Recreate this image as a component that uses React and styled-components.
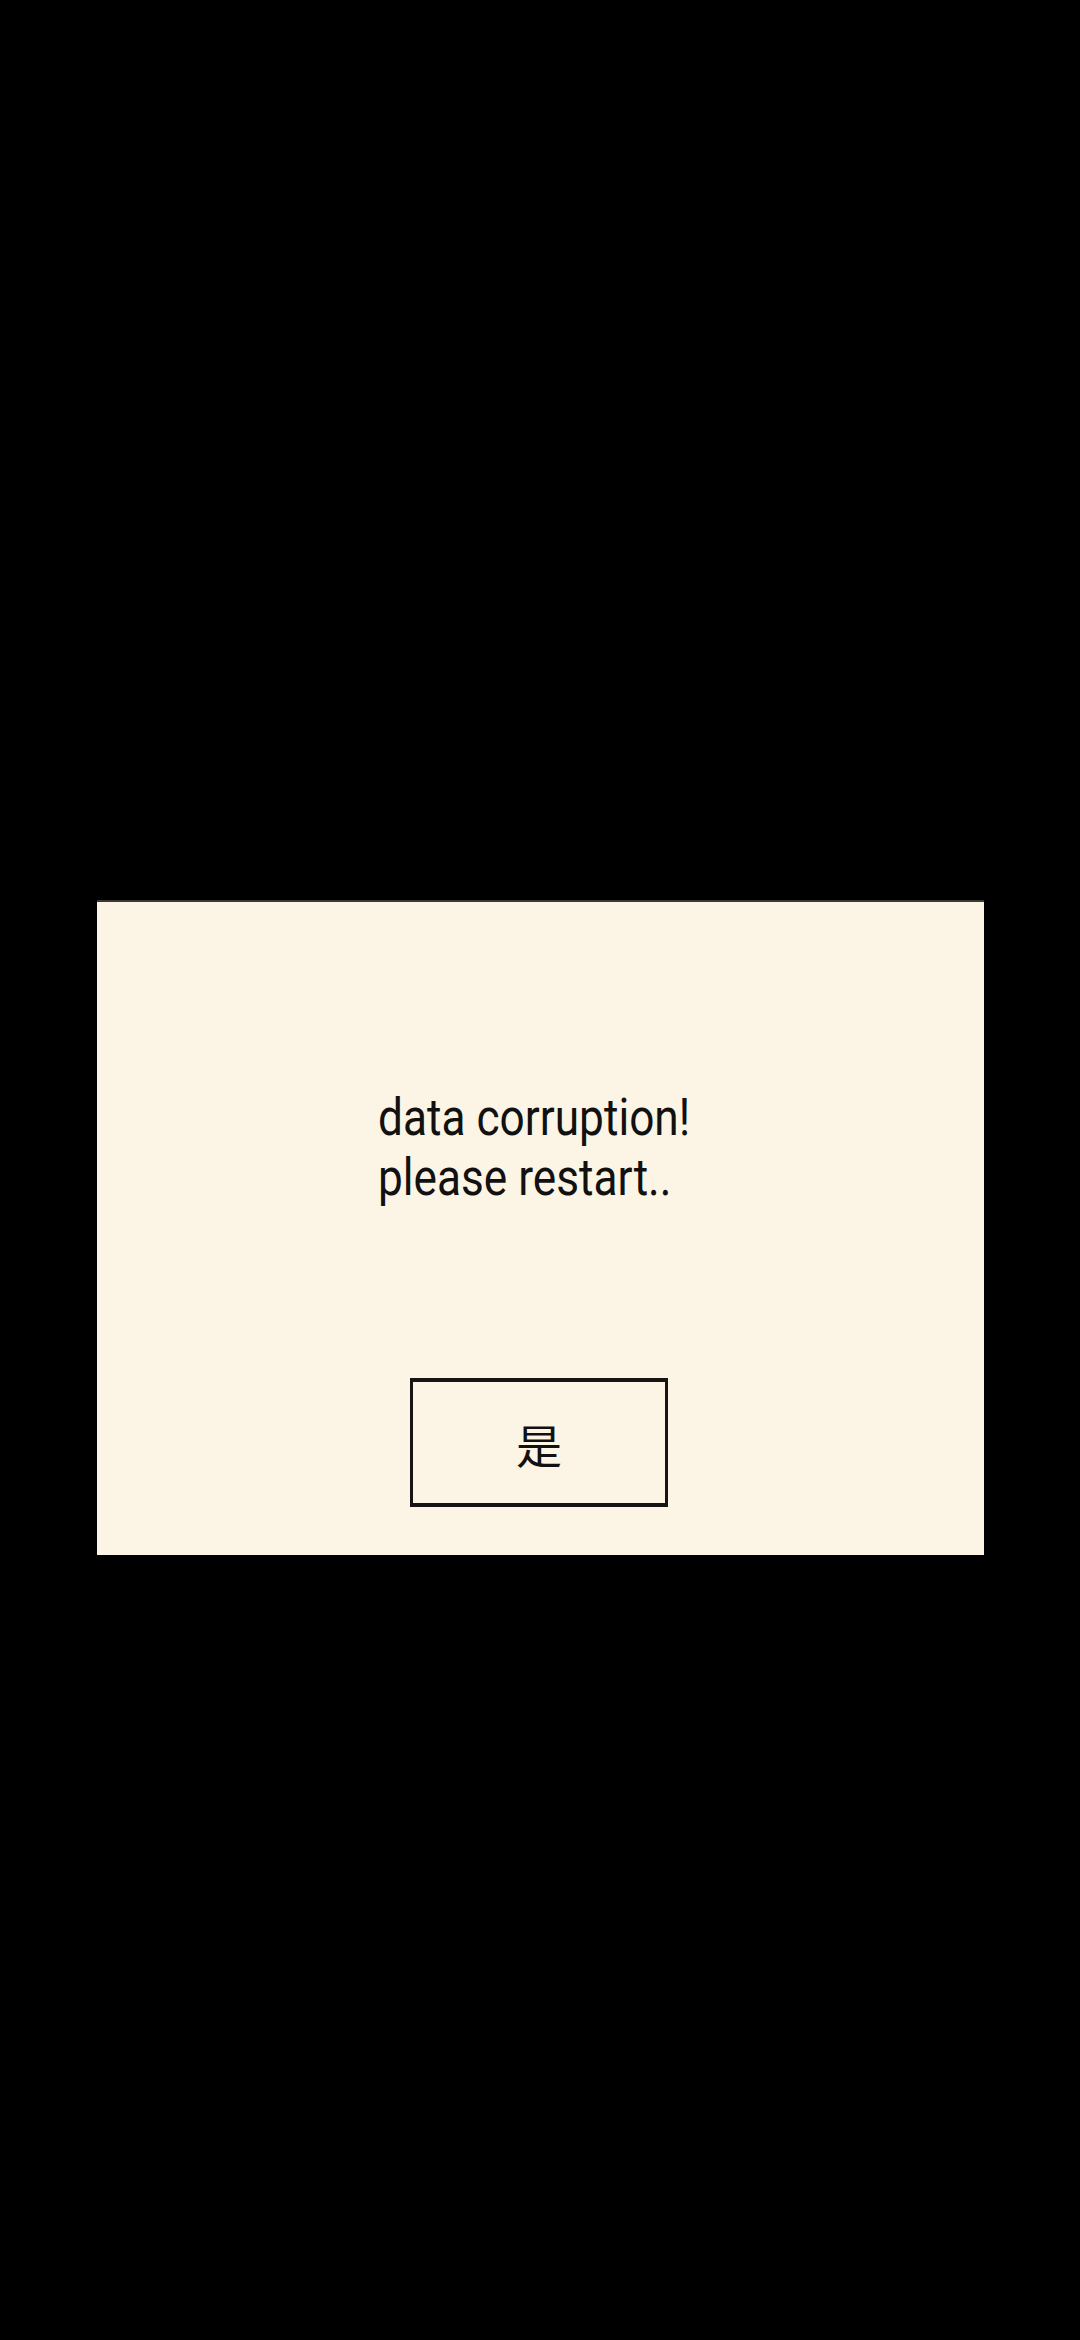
import React from 'react'
import styled, { createGlobalStyle } from 'styled-components'

const GlobalStyle = createGlobalStyle`
  html, body {
    margin: 0;
    padding: 0;
    background: #000;
  }
`

const Screen = styled.div`
  width: 1080px;
  height: 2340px;
  background: #000;
  display: flex;
  flex-direction: column;
  align-items: center;
  padding-top: 900px;
  box-sizing: border-box;
`

const Dialog = styled.div`
  width: 887px;
  height: 655px;
  box-sizing: border-box;
  background: #fcf5e5;
  border-top: 2px solid #3a3833;
  display: flex;
  flex-direction: column;
  padding-top: 186px;
`

// narrow system-style lettering, squeezed from the left edge
const Message = styled.p`
  margin: 0 0 0 281px;
  font-family: Roboto, 'Noto Sans', sans-serif;
  font-size: 52px;
  line-height: 60px;
  color: #111;
  text-align: left;
  white-space: nowrap;
  transform: scaleX(0.85);
  transform-origin: left center;
`

const ConfirmButton = styled.button`
  align-self: center;
  margin-top: 170px;
  margin-right: 2px;
  width: 258px;
  height: 129px;
  box-sizing: border-box;
  background: transparent;
  border: 3px solid #161513;
  border-top-width: 4px;
  border-bottom-width: 4px;
  font-family: 'Noto Sans CJK SC', sans-serif;
  font-size: 46px;
  color: #111;
  padding: 0;
  display: flex;
  align-items: center;
  justify-content: center;
`

export default function App() {
  return (
    <>
      <GlobalStyle />
      <Screen>
        <Dialog>
          <Message>
            data corruption!
            <br />
            please restart..
          </Message>
          <ConfirmButton>是</ConfirmButton>
        </Dialog>
      </Screen>
    </>
  )
}
